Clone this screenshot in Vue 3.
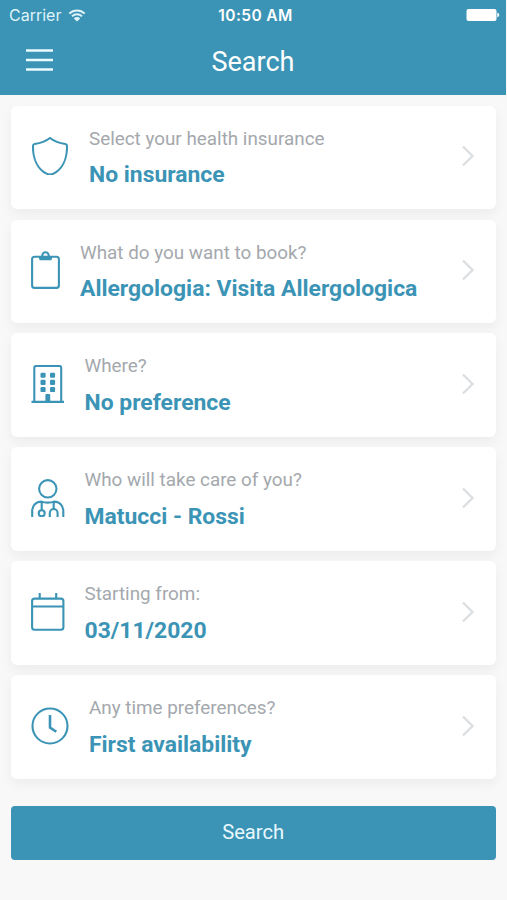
<script setup>
const items = [
  { icon: 'shield', width: 38, label: 'Select your health insurance', value: 'No insurance' },
  { icon: 'clipboard', width: 29, label: 'What do you want to book?', value: 'Allergologia: Visita Allergologica' },
  { icon: 'building', width: 33.5, label: 'Where?', value: 'No preference' },
  { icon: 'doctor', width: 33.5, label: 'Who will take care of you?', value: 'Matucci - Rossi' },
  { icon: 'calendar', width: 33.5, label: 'Starting from:', value: '03/11/2020' },
  { icon: 'clock', width: 38, label: 'Any time preferences?', value: 'First availability' },
]
</script>

<template>
  <div class="screen">
    <header class="header">
      <div class="status">
        <div class="carrier">
          <span>Carrier</span>
          <svg class="wifi" width="18" height="13" viewBox="0 0 18 13">
            <path d="M1.3 4.6a11 11 0 0 1 15.4 0M4 7.4a7.1 7.1 0 0 1 10 0" fill="none" stroke="currentColor" stroke-width="2" />
            <path d="M9 12.6 5.8 9.4a4.6 4.6 0 0 1 6.4 0z" fill="currentColor" />
          </svg>
        </div>
        <span class="time">10:50 AM</span>
        <div class="power">
          <svg width="34" height="14" viewBox="0 0 34 14">
            <rect x="0.5" y="0.9" width="30" height="12" rx="2" fill="currentColor" />
            <path d="M31.3 4.5c2.6.8 2.6 4 0 4.8z" fill="currentColor" />
          </svg>
        </div>
      </div>
      <div class="bar">
        <button class="menu" aria-label="Menu">
          <svg width="27" height="22" viewBox="0 0 27 22">
            <path d="M0 1.500h27M0 11h27M0 20.500h27" />
          </svg>
        </button>
        <h1>Search</h1>
      </div>
    </header>

    <main class="content">
      <div v-for="item in items" :key="item.icon" class="card">
        <svg class="icon" :width="item.width" height="38" :viewBox="`0 0 ${item.width} 38`">
          <path v-if="item.icon === 'shield'" d="M19 1C16 3.3 9 6.2 3.6 7Q2 7.3 2 9C1.8 21.5 6.5 32 15.5 36.6Q19 38.3 22.5 36.6C31.5 32 36.2 21.5 36 9Q36 7.3 34.4 7C29 6.2 22 3.3 19 1Z" />
          <g v-else-if="item.icon === 'clipboard'">
            <rect x="1.1" y="5.7" width="26.8" height="31.2" rx="2.5" />
            <path d="M8 7h13M8.5 8.2h12M11.3 6.5V4.5a3.2 3.2 0 0 1 6.4 0V6.5" />
          </g>
          <g v-else-if="item.icon === 'building'">
            <path d="M3.3 36V2.8Q3.3 1 5.1 1h23.3Q30.2 1 30.2 2.8V36M0.5 36.9h32.5" />
            <g class="solid">
              <rect x="9.5" y="7.7" width="5.1" height="5.1" rx="1.2" />
              <rect x="19" y="7.7" width="5.1" height="5.1" rx="1.2" />
              <rect x="9.5" y="14.8" width="5.1" height="5.1" rx="1.2" />
              <rect x="19" y="14.8" width="5.1" height="5.1" rx="1.2" />
              <rect x="9.5" y="22" width="5.1" height="5.1" rx="1.2" />
              <rect x="19" y="22" width="5.1" height="5.1" rx="1.2" />
              <rect x="14.4" y="29" width="4.8" height="8" rx="1" />
            </g>
          </g>
          <g v-else-if="item.icon === 'doctor'">
            <circle cx="16.8" cy="9.8" r="8.7" />
            <path d="M1.2 38V32C1.2 26.5 5 22.6 10.5 22.6C13.5 24 20 24 23 22.6C28.5 22.6 32.3 26.5 32.3 32V38M10.7 23v8M22.7 23v7M18.8 38V34a3.9 4 0 0 1 7.8 0V38" />
            <circle cx="10.7" cy="34.2" r="3" />
          </g>
          <g v-else-if="item.icon === 'calendar'">
            <rect x="1.1" y="5.6" width="31.3" height="31.2" rx="2.5" />
            <path d="M1.1 13.5h31.3M8.7 0v5.6M25.2 0v5.6" />
          </g>
          <g v-else>
            <circle cx="19" cy="19" r="17.5" />
            <path class="hands" d="M19 8v12.5l6.3 4.3" />
          </g>
        </svg>
        <div class="texts">
          <div class="label">{{ item.label }}</div>
          <div class="value">{{ item.value }}</div>
        </div>
        <svg class="chevron" width="14" height="22" viewBox="0 0 14 22">
          <path d="M2 1.5 11.5 11 2 20.5" />
        </svg>
      </div>
      <button class="submit">Search</button>
    </main>
  </div>
</template>

<style>
body {
  margin: 0;
  background: #f8f8f8;
}
</style>

<style scoped>
.screen {
  box-sizing: border-box;
  height: 900px;
  overflow: hidden;
  background: #f8f8f8;
  font-family: Roboto, sans-serif;
}
.header {
  height: 95px;
  margin-right: 1px;
  background: #3b94b5;
  color: #fff;
}
.status {
  display: grid;
  grid-template-columns: 1fr auto 1fr;
  align-items: center;
  height: 30px;
  padding: 0 6px 0 9px;
  font-family: Inter, sans-serif;
  font-size: 16px;
}
.carrier {
  display: flex;
  align-items: center;
  gap: 7px;
  color: #dff3f9;
}
.time {
  padding-left: 2px;
  font-weight: 600;
  font-size: 15.5px;
  letter-spacing: 0.4px;
}
.power {
  display: flex;
  justify-content: flex-end;
}
.bar {
  display: grid;
  grid-template-columns: 80px 1fr 80px;
  align-items: center;
  height: 63px;
}
.menu {
  display: flex;
  width: 27px;
  margin: -4px 0 0 26px;
  padding: 0;
  border: 0;
  background: none;
}
.menu path {
  stroke: #e9fbff;
  stroke-width: 2.3;
}
h1 {
  margin: 1px 0 0;
  text-align: center;
  font-size: 27px;
  font-weight: 400;
}
.content {
  display: flex;
  flex-direction: column;
  gap: 10.4px;
  padding: 10.7px 10.7px 0 11px;
}
.card {
  display: flex;
  align-items: center;
  box-sizing: border-box;
  height: 103.5px;
  padding: 0 21.5px 0 20px;
  border-radius: 6px;
  background: #fff;
  box-shadow: 0 5px 12px rgba(0, 0, 0, 0.05);
}
.icon {
  flex: none;
  margin-top: -2.5px;
  fill: none;
  stroke: #3b94b5;
  stroke-width: 2.1;
}
.solid {
  fill: #3b94b5;
  stroke: none;
}
.hands {
  stroke-width: 2.6;
}
.texts {
  flex: 1;
  margin: -1px 0 0 20px;
  white-space: nowrap;
}
.label {
  color: #a4a8ad;
  font-size: 18.85px;
  line-height: 28px;
}
.value {
  margin-top: 8.5px;
  color: #3b94b5;
  font-size: 22.9px;
  font-weight: 700;
  line-height: 28px;
}
.chevron {
  flex: none;
  margin-top: -2px;
  fill: none;
  stroke: #dcdfe1;
  stroke-width: 2.4;
}
.submit {
  height: 54px;
  margin-top: 16.5px;
  padding: 0 1px 1px 0;
  border: 0;
  border-radius: 4px;
  background: #3b94b5;
  color: #e9f8fd;
  font-family: inherit;
  font-size: 20.2px;
}
</style>
